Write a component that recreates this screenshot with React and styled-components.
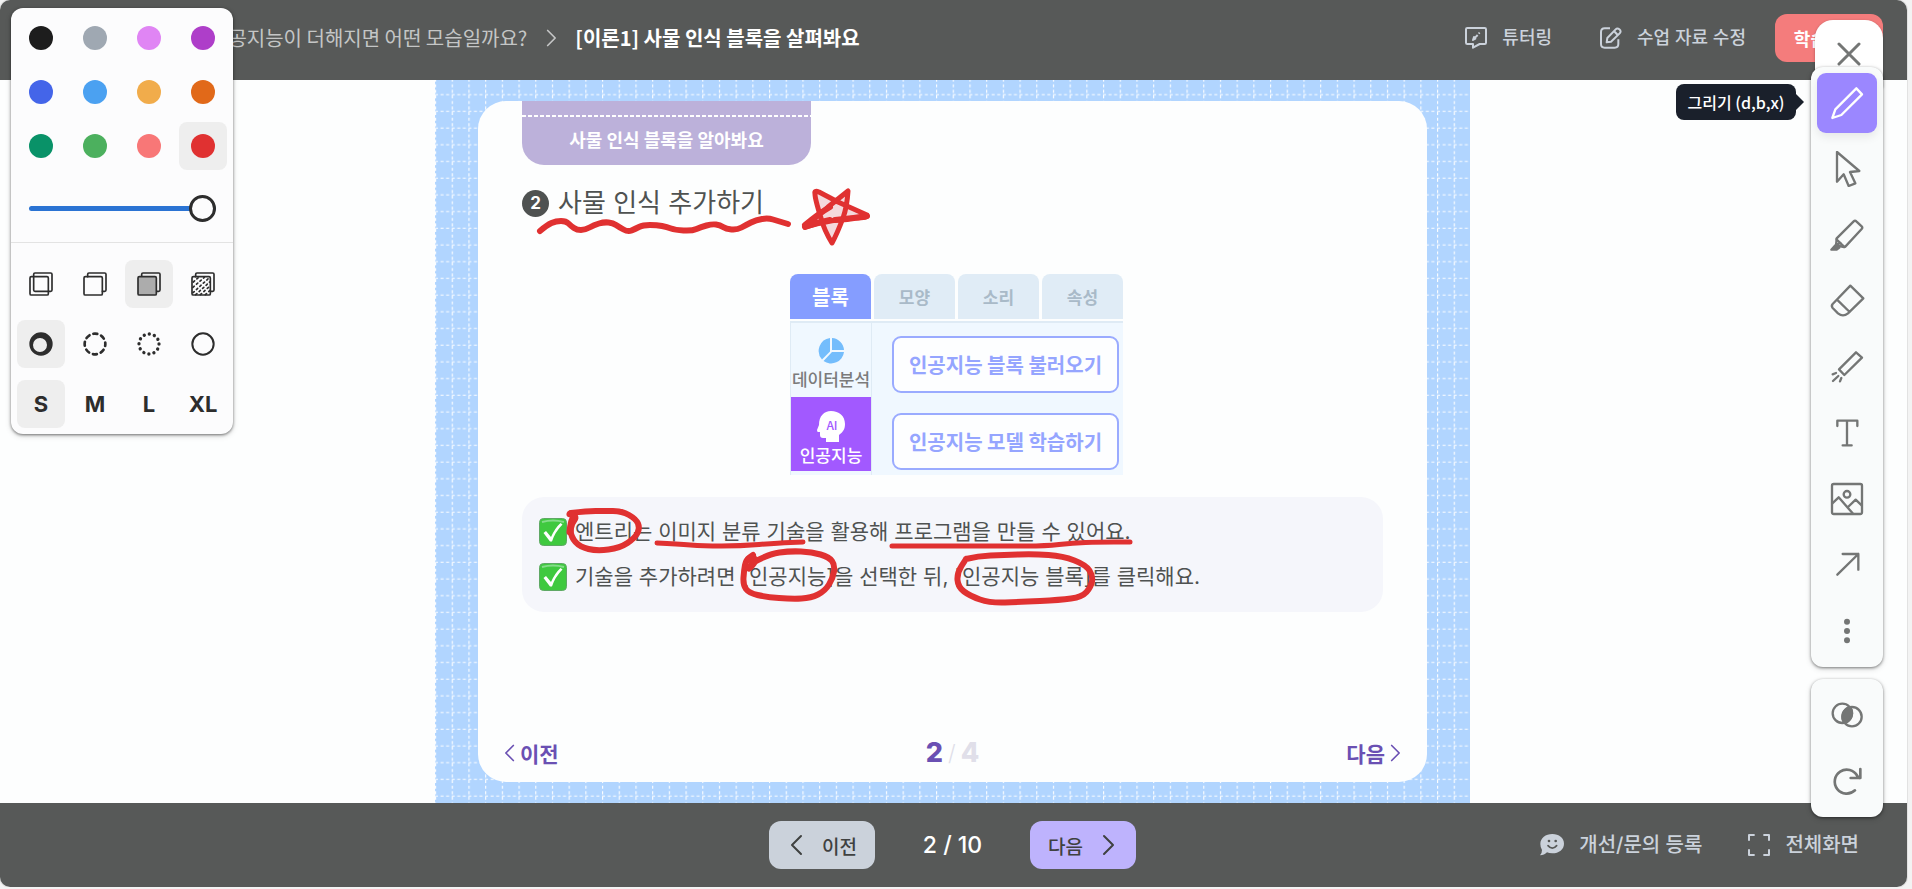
import { useState } from "react";
import styled, { createGlobalStyle, css } from "styled-components";

const GlobalStyle = createGlobalStyle`
  * {
    box-sizing: border-box;
  }
  body {
    margin: 0;
    background: #f3f3f3;
    font-family: "Noto Sans CJK KR", "Noto Sans", sans-serif;
    color: #4f5251;
  }
  button {
    font-family: inherit;
    border: none;
    padding: 0;
    background: none;
    cursor: pointer;
  }
  a {
    color: inherit;
    text-decoration: none;
  }
  h1, h2, p, ul {
    margin: 0;
    padding: 0;
    font-weight: inherit;
  }
  ul {
    list-style: none;
  }
`;

const INK = "#e03131";

const colors = [
  ["검정", "#1d1d1d"],
  ["회색", "#9fa8b2"],
  ["연보라", "#e085f4"],
  ["보라", "#ae3ec9"],
  ["파랑", "#4465e9"],
  ["하늘", "#4ba1f1"],
  ["노랑", "#f1ac4b"],
  ["주황", "#e16919"],
  ["초록", "#099268"],
  ["연두", "#4cb05e"],
  ["분홍", "#f87777"],
  ["빨강", "#e03131"],
];

const fills = [
  {
    name: "채우기 없음",
    icon: (
      <>
        <rect x="14" y="3" width="55" height="55" rx="4" />
        <rect x="3" y="14" width="55" height="55" rx="4" />
      </>
    ),
  },
  {
    name: "반투명",
    icon: (
      <>
        <path d="M14 14V7q0-4 4-4h47q4 0 4 4v47q0 4-4 4h-7" />
        <rect x="3" y="14" width="55" height="55" rx="4" />
      </>
    ),
  },
  {
    name: "단색",
    icon: (
      <>
        <path d="M14 14V7q0-4 4-4h47q4 0 4 4v47q0 4-4 4h-7" />
        <rect x="3" y="14" width="55" height="55" rx="4" fill="#acacac" />
      </>
    ),
  },
  {
    name: "패턴",
    icon: (
      <>
        <path d="M14 14V7q0-4 4-4h47q4 0 4 4v47q0 4-4 4h-7" />
        <rect x="3" y="14" width="55" height="55" rx="4" />
        <path
          strokeDasharray="5 9"
          d="M7 30l16-14M6 46l34-30M6 62l48-44M14 68l42-38M28 68l28-25M43 68l13-12"
        />
      </>
    ),
  },
];

const dashes = [
  {
    name: "손그림",
    icon: (
      <path
        fill="#2d2d2d"
        stroke="none"
        fillRule="evenodd"
        d="M36 1a35 35 0 1 0 0 70a35 35 0 1 0 0-70zM33 18a21 21 0 1 1 0 42a21 21 0 1 1 0-42z"
      />
    ),
  },
  {
    name: "파선",
    icon: (
      <circle
        cx="36"
        cy="36"
        r="31"
        strokeWidth="8"
        strokeDasharray="12 12.35"
        strokeDashoffset="6"
      />
    ),
  },
  {
    name: "점선",
    icon: (
      <circle
        cx="36"
        cy="36"
        r="30"
        strokeWidth="10"
        strokeDasharray="0.1 15.608"
      />
    ),
  },
  {
    name: "실선",
    icon: <circle cx="36" cy="36" r="32" strokeWidth="6" />,
  },
];

const sizes = ["S", "M", "L", "XL"];

const tools = [
  { name: "그리기", icon: <path d="M82 10L99 28L37 90L10 99L19 73Z" /> },
  {
    name: "선택",
    icon: <path d="M24 3V92L44 70L59 105L79 97L63 63L91 60Z" />,
  },
  {
    name: "형광펜",
    icon: (
      <>
        <path d="M23 64L74 13Q78 9 82 13L98 28Q102 32 98 36L49 89Q47 91 45 89L23 68Z" />
        <path d="M23 66L21 85L45 90M21 85L34 78" />
        <path fill="currentColor" d="M19 85L7 98H23L31 92Z" />
      </>
    ),
  },
  {
    name: "지우개",
    icon: <path d="M64 8L103 46L57 91Q42 103 27 91L11 75Q6 69 11 63ZM24 50L62 87" />,
  },
  {
    name: "레이저",
    icon: (
      <path d="M81 10L99 26L46 78L30 61ZM11 76L21 72M12 96L28 81M33 97L37 87" />
    ),
  },
  { name: "텍스트", icon: <path d="M25 33V17H85V33M54 17V91M41 91H68" /> },
  {
    name: "이미지",
    icon: (
      <>
        <rect x="9" y="9" width="90" height="90" rx="5" />
        <circle cx="54" cy="40" r="10" />
        <path d="M10 67L29 49L71 97M57 78L80 56L98 73" />
      </>
    ),
  },
  { name: "화살표", icon: <path d="M25 83L88 21M41 21H88V68" /> },
  {
    name: "더보기",
    icon: (
      <g fill="currentColor" stroke="none">
        <circle cx="54" cy="26" r="9" />
        <circle cx="54" cy="54" r="9" />
        <circle cx="54" cy="82" r="9" />
      </g>
    ),
  },
];

const actions = [
  {
    name: "투명도",
    icon: (
      <>
        <circle cx="40" cy="49" r="29" />
        <circle cx="69" cy="59" r="29" />
        <path
          fill="currentColor"
          d="M63 31A29 29 0 0 1 47 77A29 29 0 0 1 63 31Z"
        />
      </>
    ),
  },
  {
    name: "다시 실행",
    icon: (
      <path
        strokeWidth="8"
        d="M78 82A36 36 0 1 1 85 39L92 45M94 18V45H65"
      />
    ),
  },
];

// turns hand-drawn points into one soft line through their midpoints
const smooth = (points) => {
  let d = `M${points[0]}`;
  for (let i = 1; i < points.length - 1; i++) {
    const [x, y] = points[i];
    const [nx, ny] = points[i + 1];
    d += `Q${x} ${y} ${(x + nx) / 2} ${(y + ny) / 2}`;
  }
  return `${d}L${points[points.length - 1]}`;
};

const strokes = [
  {
    width: 6,
    points: [
      [540, 231], [547, 225], [556, 221], [566, 221], [571, 226], [577, 230],
      [585, 230], [594, 225], [604, 222], [613, 223], [619, 227], [628, 232],
      [635, 229], [643, 225], [657, 225], [667, 227], [675, 230], [692, 231],
      [701, 227], [712, 224], [720, 225], [726, 229], [737, 230], [746, 225],
      [756, 220], [768, 218], [778, 221], [788, 224],
    ],
  },
  {
    width: 6,
    points: [
      [571, 513], [587, 511], [604, 511], [622, 511], [636, 519], [640, 528],
      [635, 538], [620, 548], [597, 551], [580, 547], [571, 537], [570, 523],
      [575, 514],
    ],
  },
  { width: 7, points: [[570, 514], [577, 516], [571, 524], [570, 532]] },
  {
    width: 5,
    points: [[657, 543], [678, 544], [703, 546], [740, 546], [778, 543], [803, 542]],
  },
  {
    width: 5,
    points: [[892, 546], [940, 546], [1010, 546], [1045, 546], [1073, 543], [1098, 542], [1130, 542]],
  },
  {
    width: 6,
    points: [
      [754, 562], [769, 554], [790, 551], [812, 552], [829, 557], [835, 565],
      [833, 578], [825, 591], [811, 598], [792, 599], [766, 597], [749, 593],
      [743, 585], [744, 570], [746, 560], [753, 555],
    ],
  },
  { width: 7, points: [[749, 559], [753, 556], [755, 562], [749, 568]] },
  {
    width: 6,
    points: [
      [966, 559], [978, 556], [1003, 555], [1034, 554], [1063, 556], [1086, 565],
      [1093, 576], [1091, 587], [1082, 597], [1060, 600], [1020, 602],
      [990, 603], [970, 596], [958, 587], [957, 573], [966, 559],
    ],
  },
];

const HeaderIcon = ({ children }) => (
  <SmallSvg viewBox="0 0 66 66" aria-hidden="true">
    {children}
  </SmallSvg>
);

const Chevron = ({ left, size = 24 }) => (
  <ChevronSvg viewBox="0 0 24 24" $size={size} aria-hidden="true">
    <path d={left ? "M16 3L7 12L16 21" : "M8 3L17 12L8 21"} />
  </ChevronSvg>
);

const Check = () => (
  <CheckSvg viewBox="0 0 28 28" aria-hidden="true">
    <rect x="0.5" y="0.5" width="27" height="27" rx="4" fill="#3fc93f" stroke="#5fa865" />
    <path d="M3 4Q14 1 25 4" fill="none" stroke="#85dc8a" strokeWidth="2" />
    <path d="M4.5 15L7 13L12 19Q16 10 21.5 5L23.5 6.5Q16 14 13 23.5H11Z" fill="#fff" />
  </CheckSvg>
);

const StylePanel = () => {
  const [color, setColor] = useState("#e03131");
  const [fill, setFill] = useState(2);
  const [dash, setDash] = useState(0);
  const [size, setSize] = useState("S");

  return (
    <Panel aria-label="스타일">
      <Swatches>
        {colors.map(([name, value]) => (
          <PanelButton
            key={value}
            aria-label={name}
            $active={color === value}
            onClick={() => setColor(value)}
          >
            <Dot $color={value} />
          </PanelButton>
        ))}
      </Swatches>
      <SliderRow>
        <Slider type="range" min="0" max="100" defaultValue="100" aria-label="불투명도" />
      </SliderRow>
      <Options>
        {fills.map((item, i) => (
          <PanelButton
            key={item.name}
            aria-label={item.name}
            $active={fill === i}
            onClick={() => setFill(i)}
          >
            <OptionSvg viewBox="0 0 72 72">{item.icon}</OptionSvg>
          </PanelButton>
        ))}
        {dashes.map((item, i) => (
          <PanelButton
            key={item.name}
            aria-label={item.name}
            $active={dash === i}
            onClick={() => setDash(i)}
          >
            <OptionSvg viewBox="0 0 72 72">{item.icon}</OptionSvg>
          </PanelButton>
        ))}
        {sizes.map((item) => (
          <PanelButton key={item} $active={size === item} onClick={() => setSize(item)}>
            {item}
          </PanelButton>
        ))}
      </Options>
    </Panel>
  );
};

const Toolbar = () => {
  const [tool, setTool] = useState("그리기");

  return (
    <Dock>
      <CloseButton aria-label="닫기">
        <svg width="24" height="24" viewBox="0 0 24 24" aria-hidden="true">
          <path d="M2 2L22 22M22 2L2 22" />
        </svg>
      </CloseButton>
      <ToolGroup>
        {tools.map((item) => (
          <ToolButton
            key={item.name}
            aria-label={item.name}
            $active={tool === item.name}
            onClick={() => setTool(item.name)}
          >
            <ToolSvg viewBox="0 0 108 108">{item.icon}</ToolSvg>
          </ToolButton>
        ))}
        <Tooltip role="tooltip">그리기 (d,b,x)</Tooltip>
      </ToolGroup>
      <ToolGroup>
        {actions.map((item) => (
          <ToolButton key={item.name} aria-label={item.name}>
            <ToolSvg viewBox="0 0 108 108">{item.icon}</ToolSvg>
          </ToolButton>
        ))}
      </ToolGroup>
    </Dock>
  );
};

const Annotations = () => (
  <InkSvg viewBox="478 101 948 681" aria-hidden="true">
    <path
      d="M848 191Q847 207 843 218Q837 234 832 243Q824 230 821 218Q815 199 815 194Q814 190 819 192L838 202L867 215Q869 218 855 218Q834 219 805 227Q818 216 828 207Z"
      fill="#f4d9dc"
      strokeWidth="5"
    />
    <path d="M805 227Q818 222 830 220M805 225Q818 214 830 207M867 216Q850 219 835 220" strokeWidth="6" />
    {strokes.map((stroke) => (
      <path key={`${stroke.points[0]}`} d={smooth(stroke.points)} strokeWidth={stroke.width} />
    ))}
  </InkSvg>
);

const EntryDiagram = () => (
  <Diagram>
    <DiagramTabs>
      <DiagramTab $active>블록</DiagramTab>
      <DiagramTab>모양</DiagramTab>
      <DiagramTab>소리</DiagramTab>
      <DiagramTab>속성</DiagramTab>
    </DiagramTabs>
    <DiagramBody>
      <Categories>
        <Category>
          <svg width="26" height="26" viewBox="0 0 26 26" aria-hidden="true">
            <path fill="#74bdfc" d="M12 0A13 13 0 0 0 4 21.500L12 13.500ZM14 0V12H26A13 13 0 0 0 14 0ZM26 14H14L5.500 23A13 13 0 0 0 26 14Z" />
          </svg>
          데이터분석
        </Category>
        <Category $active>
          <svg width="28" height="32" viewBox="0 0 28 32" aria-hidden="true">
            <path
              fill="#fff"
              d="M14 0C22 0 28 5 28 13C28 18 26 21 22 24V31H9V27H6Q3 27 3 24V21H1Q0 21 0 19L2 14C2 5 7 0 14 0Z"
            />
            <text x="15" y="19" textAnchor="middle" fontSize="12" fontWeight="700" fill="#a259ff">
              AI
            </text>
          </svg>
          인공지능
        </Category>
      </Categories>
      <Blocks>
        <Block>인공지능 블록 불러오기</Block>
        <Block>인공지능 모델 학습하기</Block>
      </Blocks>
    </DiagramBody>
  </Diagram>
);

const App = () => {
  return (
    <Frame>
      <GlobalStyle />
      <Header>
        <Breadcrumb aria-label="현재 위치">
          <a href="#course">인공지능이 더해지면 어떤 모습일까요?</a>
          <Chevron size={20} />
          <h1>[이론1] 사물 인식 블록을 살펴봐요</h1>
        </Breadcrumb>
        <HeaderMenu>
          <TextButton>
            <HeaderIcon>
              <path d="M7 3H59Q63 3 63 7V47Q63 51 59 51H44L24 62V51H7Q3 51 3 47V7Q3 3 7 3Z" />
              <path d="M24 39L27 30L31 35ZM31 31L38 24M41 20L44 17" strokeWidth="6" />
            </HeaderIcon>
            튜터링
          </TextButton>
          <TextButton>
            <HeaderIcon>
              <path d="M30 4H14Q3 4 3 15V51Q3 62 14 62H44Q55 62 55 51V37" />
              <path d="M20 46L22 33L47 7Q52 2 58 7Q65 13 59 19L33 44ZM42 12L53 24" />
            </HeaderIcon>
            수업 자료 수정
          </TextButton>
          <EndButton>학습 종료</EndButton>
        </HeaderMenu>
      </Header>

      <Main>
        <Stage>
          <GridSvg aria-hidden="true">
            <defs>
              <pattern id="cells" y="-1.3" width="16.7" height="16.7" patternUnits="userSpaceOnUse">
                <path d="M0.6 0V16.7M0 16H16.7" stroke="#fff" strokeWidth="1.1" strokeDasharray="3 2.567" />
              </pattern>
            </defs>
            <rect width="100%" height="100%" fill="url(#cells)" />
          </GridSvg>
          <Card>
            <Ribbon>사물 인식 블록을 알아봐요</Ribbon>
            <StepTitle>
              <StepNumber>2</StepNumber>
              사물 인식 추가하기
            </StepTitle>
            <EntryDiagram />
            <Notes>
              <li>
                <Check />
                엔트리는 이미지 분류 기술을 활용해 프로그램을 만들 수 있어요.
              </li>
              <li>
                <Check />
                기술을 추가하려면 [인공지능]을 선택한 뒤, [인공지능 블록]를 클릭해요.
              </li>
            </Notes>
            <Pager>
              <PagerButton>
                <Chevron left size={20} />
                이전
              </PagerButton>
              <PageCount>
                <b>2</b>
                <i>/</i>
                <span>4</span>
              </PageCount>
              <PagerButton $end>
                다음
                <Chevron size={20} />
              </PagerButton>
            </Pager>
            <Annotations />
          </Card>
        </Stage>
      </Main>

      <Footer>
        <StepNav>
          <NavButton>
            <Chevron left />
            이전
          </NavButton>
          <StepCount>2 / 10</StepCount>
          <NavButton $next>
            다음
            <Chevron />
          </NavButton>
        </StepNav>
        <FooterMenu>
          <TextButton $large>
            <svg width="24" height="22" viewBox="0 0 72 66" aria-hidden="true">
              <path fill="#cbd2db" d="M37 0C57 0 72 12 72 29S57 58 37 58Q27 58 21 55Q13 64 0 64Q6 58 6 48Q1 40 1 30C1 12 17 0 37 0Z" />
              <circle cx="27" cy="21" r="4" fill="#575958" />
              <circle cx="47" cy="21" r="4" fill="#575958" />
              <path d="M24 35Q37 50 50 35" fill="none" stroke="#575958" strokeWidth="5" strokeLinecap="round" />
            </svg>
            개선/문의 등록
          </TextButton>
          <TextButton $large>
            <HeaderIcon>
              <path d="M3 20V3H20M46 3H63V20M63 46V63H46M20 63H3V46" />
            </HeaderIcon>
            전체화면
          </TextButton>
        </FooterMenu>
      </Footer>

      <StylePanel />
      <Toolbar />
    </Frame>
  );
};

const Frame = styled.div`
  position: relative;
  display: flex;
  flex-direction: column;
  min-height: calc(100vh - 2px);
  margin-right: 5px;
  background: #fdfefe;
  border-radius: 10px;
  overflow: hidden;
  box-shadow: 0 0 0 1px #e2e2e2;
`;

const Header = styled.header`
  display: flex;
  align-items: center;
  justify-content: space-between;
  height: 80px;
  padding: 0 24px 4px 210px;
  background: #575958;
`;

const Breadcrumb = styled.nav`
  display: flex;
  align-items: center;
  gap: 14px;
  font-size: 20px;
  line-height: 28px;
  color: #c4c6c6;
  white-space: nowrap;
  h1 {
    font-size: 20px;
    font-weight: 700;
    color: #fff;
  }
`;

const HeaderMenu = styled.div`
  display: flex;
  align-items: center;
  gap: 10px;
`;

const TextButton = styled.button`
  display: flex;
  align-items: center;
  gap: 15px;
  padding: 0 19px;
  font-family: Inter, "Noto Sans CJK KR Medium", "Noto Sans CJK KR", sans-serif;
  font-size: ${(props) => (props.$large ? "20px" : "18px")};
  line-height: 28px;
  font-weight: 500;
  color: #cbd2db;
  white-space: nowrap;
`;

const EndButton = styled.button`
  width: 108px;
  height: 48px;
  border-radius: 12px;
  background: #f47c7c;
  font-size: 18px;
  font-weight: 700;
  color: #fff;
`;

const SmallSvg = styled.svg`
  width: 22px;
  height: 22px;
  fill: none;
  stroke: #cbd2db;
  stroke-width: 6;
  stroke-linejoin: round;
`;

const ChevronSvg = styled.svg`
  flex: none;
  width: ${(props) => props.$size}px;
  height: ${(props) => props.$size}px;
  fill: none;
  stroke: currentColor;
  stroke-width: 2;
  stroke-linecap: round;
  stroke-linejoin: round;
`;

const Main = styled.main`
  flex: 1;
  display: flex;
  justify-content: center;
  padding-right: 2px;
`;

const Stage = styled.section`
  position: relative;
  display: flex;
  width: 100%;
  max-width: 1035px;
  padding: 21px 43px;
  background: #b1d5ff;
`;

const GridSvg = styled.svg`
  position: absolute;
  inset: 0;
  width: 100%;
  height: 100%;
`;

const Card = styled.article`
  position: relative;
  flex: 1;
  display: flex;
  flex-direction: column;
  align-items: flex-start;
  padding: 0 44px;
  border-radius: 28px;
  background: #fdfefe;
`;

const Ribbon = styled.p`
  width: 289px;
  height: 64px;
  padding-top: 14px;
  border-radius: 0 0 22px 22px;
  background: #bcb1da;
  font-size: 18px;
  font-weight: 700;
  line-height: 48px;
  text-align: center;
  color: #fff;
  &::before {
    content: "";
    display: block;
    height: 2px;
    margin-bottom: -2px;
    background: repeating-linear-gradient(90deg, #fff 0 4px, transparent 4px 6px);
  }
`;

const StepTitle = styled.h2`
  display: flex;
  align-items: center;
  gap: 9px;
  margin-top: 19px;
  font-family: Inter, "Noto Sans CJK KR", sans-serif;
  font-size: 26px;
  line-height: 38px;
`;

const StepNumber = styled.span`
  width: 27px;
  height: 27px;
  border-radius: 50%;
  background: #4f5251;
  font-family: Inter, sans-serif;
  font-size: 17px;
  font-weight: 700;
  line-height: 27px;
  text-align: center;
  color: #fff;
`;

const Diagram = styled.div`
  align-self: center;
  width: 333px;
  margin-top: 52px;
  margin-left: 8px;
`;

const DiagramTabs = styled.div`
  display: grid;
  grid-template-columns: repeat(4, 81px);
  gap: 3px;
`;

const DiagramTab = styled.div`
  height: 45px;
  border-radius: 8px 8px 0 0;
  background: #e0ecf6;
  font-size: 17px;
  font-weight: 700;
  line-height: 45px;
  text-align: center;
  color: #a9bac8;
  ${(props) =>
    props.$active &&
    css`
      background: #859dff;
      font-size: 20px;
      color: #fff;
    `}
`;

const DiagramBody = styled.div`
  display: flex;
  margin-top: 2px;
  border-top: 2px solid #dfebf5;
  background: #f0f8ff;
`;

const Categories = styled.div`
  width: 82px;
  padding-bottom: 4px;
  border-left: 1px solid #dfebf5;
  border-right: 1px solid #dfebf5;
`;

const Category = styled.div`
  display: flex;
  flex-direction: column;
  align-items: center;
  justify-content: flex-end;
  gap: 3px;
  height: 74px;
  padding-bottom: 6px;
  font-family: "Noto Sans CJK KR Medium", "Noto Sans CJK KR", sans-serif;
  font-size: 17px;
  font-weight: 500;
  line-height: 24px;
  color: #7b7b7b;
  white-space: nowrap;
  ${(props) =>
    props.$active &&
    css`
      gap: 0;
      padding-bottom: 4px;
      background: #a259ff;
      color: #fff;
    `}
`;

const Blocks = styled.div`
  flex: 1;
  display: flex;
  flex-direction: column;
  gap: 20px;
  padding: 13px 4px 4px 20px;
`;

const Block = styled.div`
  height: 57px;
  border: 2px solid #9aabff;
  border-radius: 9px;
  background: #fdfeff;
  font-size: 20px;
  font-weight: 700;
  line-height: 53px;
  text-align: center;
  color: #95a5ff;
`;

const Notes = styled.ul`
  align-self: stretch;
  margin-top: 22px;
  padding: 12px 17px 13px;
  border-radius: 22px;
  background: #f5f6fb;
  font-family: Inter, "Noto Sans CJK KR", sans-serif;
  font-size: 21px;
  line-height: 45px;
  li {
    display: flex;
    align-items: center;
    gap: 8px;
  }
`;

const CheckSvg = styled.svg`
  flex: none;
  width: 28px;
  height: 28px;
`;

const Pager = styled.div`
  align-self: stretch;
  display: grid;
  grid-template-columns: 1fr auto 1fr;
  align-items: center;
  margin: auto -22px 13px;
`;

const PagerButton = styled.button`
  display: flex;
  align-items: center;
  justify-self: ${(props) => (props.$end ? "end" : "start")};
  font-size: 21px;
  font-weight: 700;
  line-height: 32px;
  color: #6a50b3;
`;

const PageCount = styled.p`
  display: flex;
  align-items: center;
  gap: 5px;
  font-family: Inter, sans-serif;
  font-size: 27px;
  font-weight: 800;
  line-height: 32px;
  color: #e0dfe9;
  b {
    font-weight: 800;
    color: #6a50b3;
  }
  i {
    font-size: 22px;
    font-style: normal;
    font-weight: 300;
  }
`;

const InkSvg = styled.svg`
  position: absolute;
  top: 0;
  left: 0;
  width: 948px;
  height: 681px;
  fill: none;
  stroke: ${INK};
  stroke-linecap: round;
  stroke-linejoin: round;
  pointer-events: none;
`;

const Footer = styled.footer`
  display: grid;
  grid-template-columns: 1fr auto 1fr;
  align-items: center;
  height: 84px;
  padding-right: 2px;
  background: #575958;
`;

const StepNav = styled.div`
  grid-column: 2;
  display: flex;
  align-items: center;
`;

const NavButton = styled.button`
  display: flex;
  align-items: center;
  justify-content: space-between;
  width: 106px;
  height: 48px;
  padding: ${(props) => (props.$next ? "0 16px 0 18px" : "0 18px 0 16px")};
  border-radius: 12px;
  background: ${(props) => (props.$next ? "#beb3fd" : "#cbd2db")};
  font-family: "Noto Sans CJK KR Medium", "Noto Sans CJK KR", sans-serif;
  font-size: 19px;
  font-weight: 500;
  color: #3f4140;
`;

const StepCount = styled.span`
  width: 155px;
  font-family: Inter, sans-serif;
  font-size: 23px;
  font-weight: 500;
  text-align: center;
  color: #fff;
`;

const FooterMenu = styled.div`
  justify-self: end;
  display: flex;
  gap: 8px;
  padding-right: 27px;
`;

const Panel = styled.aside`
  position: absolute;
  top: 8px;
  left: 11px;
  width: 222px;
  border-radius: 12px;
  background: #fcfcfd;
  box-shadow: 0 1px 3px rgba(0, 0, 0, 0.5), 0 2px 6px rgba(0, 0, 0, 0.14);
`;

const Swatches = styled.div`
  display: grid;
  grid-template-columns: repeat(4, 48px);
  gap: 6px;
  padding: 6px 6px 0;
`;

const Options = styled(Swatches)`
  row-gap: 12px;
  padding: 17px 6px 6px;
  border-top: 1px solid #e3e3e3;
`;

const PanelButton = styled.button`
  display: grid;
  place-items: center;
  height: 48px;
  border-radius: 8px;
  background: ${(props) => (props.$active ? "#eeeeee" : "transparent")};
  font-family: Inter, sans-serif;
  font-size: 22px;
  font-weight: 700;
  color: #2d2d2d;
`;

const Dot = styled.span`
  width: 24px;
  height: 24px;
  border-radius: 50%;
  background: ${(props) => props.$color};
`;

const OptionSvg = styled.svg`
  width: 24px;
  height: 24px;
  fill: none;
  stroke: #2d2d2d;
  stroke-width: 5;
  stroke-linecap: round;
`;

const SliderRow = styled.div`
  display: flex;
  align-items: center;
  height: 72px;
  padding: 5px 17px 0 18px;
`;

const Slider = styled.input`
  appearance: none;
  width: 100%;
  height: 27px;
  margin: 0;
  background: transparent;
  &::-webkit-slider-runnable-track {
    height: 5px;
    border-radius: 3px;
    background: #2a73d3;
  }
  &::-webkit-slider-thumb {
    appearance: none;
    width: 27px;
    height: 27px;
    margin-top: -11px;
    border: 3px solid #2d2d2d;
    border-radius: 50%;
    background: #fcfcfd;
  }
`;

const Dock = styled.aside`
  position: absolute;
  top: 20px;
  right: 24px;
  display: flex;
  flex-direction: column;
  align-items: flex-end;
  color: #747675;
  svg {
    fill: none;
    stroke: currentColor;
    stroke-linecap: round;
    stroke-linejoin: round;
  }
`;

const CloseButton = styled.button`
  width: 68px;
  height: 67px;
  margin-bottom: -20px;
  padding-top: 4px;
  border-radius: 18px 18px 0 0;
  background: #fff;
  color: #747675;
  box-shadow: 0 1px 3px rgba(0, 0, 0, 0.3);
  svg {
    stroke-width: 3;
  }
`;

const ToolGroup = styled.div`
  position: relative;
  display: grid;
  gap: 6px;
  padding: 6px;
  border-radius: 12px;
  background: #f9fbfb;
  box-shadow: 0 1px 3px rgba(0, 0, 0, 0.45), 0 2px 6px rgba(0, 0, 0, 0.14);
  & + & {
    margin-top: 12px;
  }
`;

const ToolButton = styled.button`
  display: grid;
  place-items: center;
  width: 60px;
  height: 60px;
  border-radius: 9px;
  color: #747675;
  ${(props) =>
    props.$active &&
    css`
      background: #9b87ff;
      color: #fff;
      box-shadow: 0 4px 10px rgba(0, 0, 0, 0.08);
    `}
`;

const ToolSvg = styled.svg`
  width: 36px;
  height: 36px;
  stroke-width: 7;
`;

const Tooltip = styled.span`
  position: absolute;
  top: 17px;
  right: 87px;
  width: 120px;
  border-radius: 8px;
  background: #1a202b;
  font-size: 16px;
  font-weight: 500;
  line-height: 36px;
  text-align: center;
  white-space: nowrap;
  color: #fff;
  &::after {
    content: "";
    position: absolute;
    top: 10px;
    left: 100%;
    border: 8px solid transparent;
    border-right: none;
    border-left-color: #1a202b;
  }
`;

export default App;
